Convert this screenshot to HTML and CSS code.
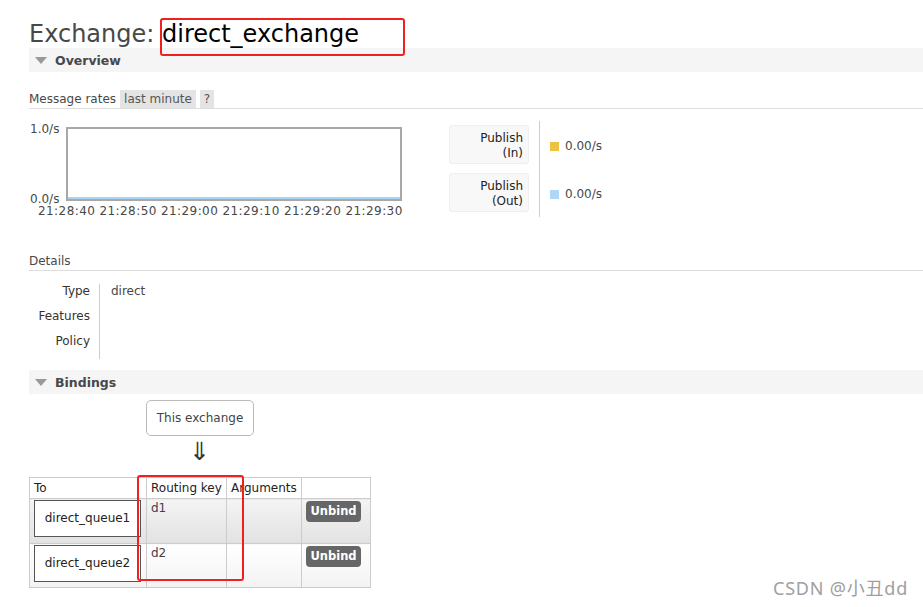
FILE: index.html
```html
<!DOCTYPE html>
<html>
<head>
<meta charset="utf-8">
<link rel="stylesheet" href="styles.css">
</head>
<body>
<div class="page">
  <h1 class="title">Exchange: <b class="name">direct_exchange</b></h1>
  <div class="section-head"><span class="tri"></span>Overview</div>
  <div class="rates-head">
    <span>Message rates</span>
    <span class="pill">last minute</span>
    <span class="pill q">?</span>
  </div>
  <div class="rates">
    <div class="chart">
      <div class="ylab top">1.0/s</div>
      <div class="plot"><div class="flat"></div></div>
      <div class="ylab bot">0.0/s</div>
      <div class="xlab">21:28:40 21:28:50 21:29:00 21:29:10 21:29:20 21:29:30</div>
    </div>
    <div class="legend">
      <div class="leg-labels">
        <div class="leg-box">Publish<br>(In)</div>
        <div class="leg-box">Publish<br>(Out)</div>
      </div>
      <div class="leg-vals">
        <div class="leg-val"><span class="sw yellow"></span>0.00/s</div>
        <div class="leg-val"><span class="sw blue"></span>0.00/s</div>
      </div>
    </div>
  </div>
  <div class="sub-head">Details</div>
  <div class="details">
    <div class="dkeys"><div>Type</div><div>Features</div><div>Policy</div></div>
    <div class="dvals"><div>direct</div><div></div><div></div></div>
  </div>
  <div class="section-head"><span class="tri"></span>Bindings</div>
  <div class="this-ex"><span class="ex-box">This exchange</span></div>
  <div class="arrow">⇓</div>
  <table class="bind">
    <thead>
      <tr><th class="c1">To</th><th class="c2">Routing key</th><th class="c3">Arguments</th><th class="c4"></th></tr>
    </thead>
    <tbody>
      <tr class="alt1"><td><span class="queue">direct_queue1</span></td><td>d1</td><td></td><td><span class="btn">Unbind</span></td></tr>
      <tr class="alt2"><td><span class="queue">direct_queue2</span></td><td>d2</td><td></td><td><span class="btn">Unbind</span></td></tr>
    </tbody>
  </table>
</div>
<div class="mark mark-title"></div>
<div class="mark mark-key"></div>
<div class="watermark">CSDN @小丑dd</div>
</body>
</html>
```

FILE: styles.css
```css
html, body {
  margin: 0;
  padding: 0;
  background: #fff;
}
body {
  font-family: "DejaVu Sans", Verdana, sans-serif;
  font-size: 12px;
  color: #484848;
  width: 923px;
  height: 607px;
  overflow: hidden;
  position: relative;
}
.page {
  padding-left: 29px;
}
.title {
  margin: 0;
  padding-top: 19px;
  height: 29px;
  font-size: 24px;
  font-weight: normal;
  line-height: 30px;
  color: #484848;
  white-space: nowrap;
}
.title .name {
  font-weight: normal;
  color: #000;
}
.section-head {
  height: 24px;
  background: #f5f5f5;
  display: flex;
  align-items: center;
  font-weight: bold;
  font-size: 12.5px;
  color: #484848;
}
.tri {
  width: 0;
  height: 0;
  border-left: 6px solid transparent;
  border-right: 6px solid transparent;
  border-top: 7px solid #999;
  margin-left: 6px;
  margin-right: 8px;
}
.rates-head {
  margin-top: 17px;
  height: 19px;
  border-bottom: 1px solid #ddd;
  display: flex;
  align-items: center;
  gap: 4px;
}
.pill {
  background: #e4e4e4;
  height: 18px;
  line-height: 18px;
  padding: 0 4px;
  color: #555;
}
.rates {
  display: flex;
  height: 96px;
  margin-top: 12px;
}
.chart {
  position: relative;
  width: 380px;
  height: 96px;
}
.ylab {
  position: absolute;
  left: 1px;
  line-height: 11px;
}
.ylab.top { top: 3px; }
.ylab.bot { top: 73px; }
.plot {
  position: absolute;
  left: 37px;
  top: 6px;
  width: 332px;
  height: 70px;
  border: 2px solid #a8a8a8;
  background: #fff;
}
.flat {
  position: absolute;
  left: 0;
  right: 0;
  bottom: 0;
  height: 2px;
  background: #a9d3f3;
}
.xlab {
  position: absolute;
  left: 9px;
  top: 85px;
  line-height: 11px;
  white-space: nowrap;
  letter-spacing: 0.42px;
}
.legend {
  display: flex;
  margin-left: 40px;
}
.leg-labels {
  display: flex;
  flex-direction: column;
  gap: 9px;
  padding-top: 4px;
  padding-right: 10px;
  border-right: 1px solid #ccc;
}
.leg-box {
  width: 73px;
  height: 32px;
  padding: 5px 5px 0 0;
  background: #f8f8f8;
  border: 1px solid #eee;
  border-radius: 3px;
  text-align: right;
  line-height: 15px;
  color: #222;
}
.leg-vals {
  display: flex;
  flex-direction: column;
  padding-left: 10px;
  padding-top: 18px;
  gap: 34px;
}
.leg-val {
  display: flex;
  align-items: center;
  line-height: 14px;
}
.sw {
  width: 9px;
  height: 9px;
  margin-right: 6px;
}
.sw.yellow { background: #edc240; }
.sw.blue { background: #afd8f8; }
.sub-head {
  margin-top: 36px;
  height: 17px;
  line-height: 16px;
  border-bottom: 1px solid #ddd;
}
.details {
  display: flex;
  margin-top: 13px;
  height: 75px;
}
.dkeys {
  width: 61px;
  padding-right: 9px;
  border-right: 1px solid #ccc;
  text-align: right;
  color: #333;
}
.dkeys div, .dvals div {
  height: 25px;
  line-height: 15px;
}
.dvals {
  padding-left: 11px;
}
.details + .section-head { margin-top: 11px; }
.this-ex {
  margin-top: 6px;
  margin-left: 117px;
  height: 36px;
}
.ex-box {
  display: inline-block;
  width: 106px;
  height: 34px;
  line-height: 34px;
  text-align: center;
  border: 1px solid #bbb;
  border-radius: 5px;
  color: #444;
}
.arrow {
  margin-left: 160px;
  margin-top: 3px;
  height: 38px;
  font-size: 25px;
  line-height: 26px;
  color: #333;
}
.bind {
  border-collapse: collapse;
  font-size: 12px;
}
.bind th, .bind td {
  border: 1px solid #ccc;
  padding: 0;
}
.bind th {
  font-weight: normal;
  text-align: left;
  color: #222;
  height: 20px;
  padding-left: 4px;
  line-height: 20px;
  vertical-align: bottom;
}
.c1 { width: 112px; }
.c2 { width: 75px; }
.c3 { width: 70px; }
.c4 { width: 64px; }
.bind td {
  height: 42px;
  vertical-align: top;
  padding: 2px 4px 0 4px;
  color: #4a3a4a;
  line-height: 14px;
}
.bind td:first-child { padding: 1px 4px 0 4px; }
.alt1 td { background: linear-gradient(#f4f4f4, #e2e2e2); }
.alt2 td { background: linear-gradient(#ffffff, #f3f3f3); }
.alt2 td { height: 41px; }
.queue {
  display: block;
  width: 105px;
  height: 35px;
  line-height: 35px;
  border: 1px solid #555;
  background: #fff;
  text-align: center;
  color: #222;
}
.btn {
  display: inline-block;
  background: #666;
  color: #fff;
  font-weight: bold;
  font-size: 11.5px;
  border-radius: 4px;
  height: 21px;
  line-height: 21px;
  width: 55px;
  text-align: center;
}
.mark {
  position: absolute;
  border: 2px solid #f02020;
  border-radius: 3px;
}
.mark-title {
  left: 160px;
  top: 18px;
  width: 241px;
  height: 34px;
}
.mark-key {
  left: 137px;
  top: 475px;
  width: 103px;
  height: 102px;
}
.watermark {
  position: absolute;
  left: 773px;
  top: 575px;
  font-family: "Noto Sans", "Noto Sans CJK SC", sans-serif;
  font-size: 18px;
  letter-spacing: 0.8px;
  color: #a0a0a0;
  line-height: 26px;
  white-space: nowrap;
}
```
